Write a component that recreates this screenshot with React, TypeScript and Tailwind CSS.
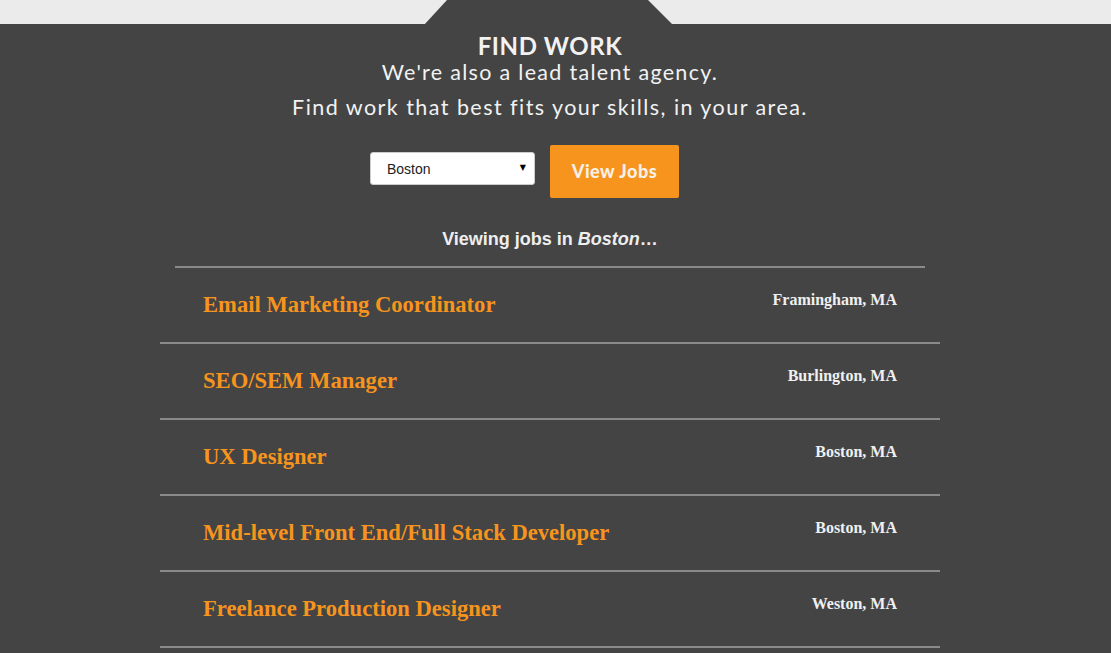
import React from "react";

const jobs = [
  { title: "Email Marketing Coordinator", loc: "Framingham, MA" },
  { title: "SEO/SEM Manager", loc: "Burlington, MA" },
  { title: "UX Designer", loc: "Boston, MA" },
  { title: "Mid-level Front End/Full Stack Developer", loc: "Boston, MA" },
  { title: "Freelance Production Designer", loc: "Weston, MA" },
];

export default function App() {
  return (
    <div className="relative min-h-screen w-full bg-[#ebebeb] overflow-hidden">
      <div className="h-[24px]" />
      <svg
        className="absolute left-0 top-0"
        width="1111"
        height="25"
        viewBox="0 0 1111 25"
      >
        <polygon points="447,0 648,0 673,25 424,25" fill="#444444" />
      </svg>
      <div className="bg-[#444444] min-h-[629px] w-full">
        <div className="w-[1100px] flex flex-col items-center pb-10">
          <h1 className="mt-[10px] text-[24px] leading-[24px] font-bold tracking-[0.6px] text-[#f2f2f2] font-['Lato',sans-serif]">
            FIND WORK
          </h1>
          <p className="mt-[1px] text-[21.5px] leading-[26px] tracking-[1.3px] text-[#f2f2f2] font-['Lato',sans-serif]">
            We're also a lead talent agency.
          </p>
          <p className="mt-[9px] text-[21.5px] leading-[26px] tracking-[1.45px] text-[#f2f2f2] font-['Lato',sans-serif]">
            Find work that best fits your skills, in your area.
          </p>
          <div className="mt-[25px] mr-[51px] flex items-center gap-[15px]">
            <div className="relative mt-[-6px] h-[33px] w-[165px] rounded-[3px] border border-[#cccccc] bg-white">
              <span className="absolute left-[16px] top-[7px] text-[14px] leading-[18px] text-[#222] font-['Liberation_Sans',Arial,sans-serif]">
                Boston
              </span>
              <span className="absolute right-[8px] top-[9px] text-[8px] leading-[12px] text-black font-['DejaVu_Sans',sans-serif]">
                ▼
              </span>
            </div>
            <button className="h-[53px] w-[129px] rounded-[2px] bg-[#f7941d] text-[18px] font-black tracking-[0.5px] text-[#f7f0e6] font-['Lato',sans-serif]">
              View Jobs
            </button>
          </div>
          <div className="mt-[30px] text-[18px] leading-[22px] font-bold text-[#eeeeee] font-['Liberation_Sans',Arial,sans-serif]">
            Viewing jobs in <em>Boston</em>…
          </div>
          <div className="mt-[16px] h-[2px] w-[750px] bg-[#8a8a8a]" />
          <div className="flex w-[780px] flex-col">
            {jobs.map((j) => (
              <div
                key={j.title}
                className="flex h-[76px] items-start justify-between border-b-2 border-[#8a8a8a] px-[43px] pt-[21px]"
              >
                <span className="mt-[3px] text-[22.6px] leading-[26px] font-bold text-[#f7941d] font-['Liberation_Serif','Times_New_Roman',serif]">
                  {j.title}
                </span>
                <span className="mt-[2px] text-[16px] leading-[18px] font-bold text-[#f0f0f0] font-['Liberation_Serif','Times_New_Roman',serif]">
                  {j.loc}
                </span>
              </div>
            ))}
          </div>
        </div>
      </div>
    </div>
  );
}
